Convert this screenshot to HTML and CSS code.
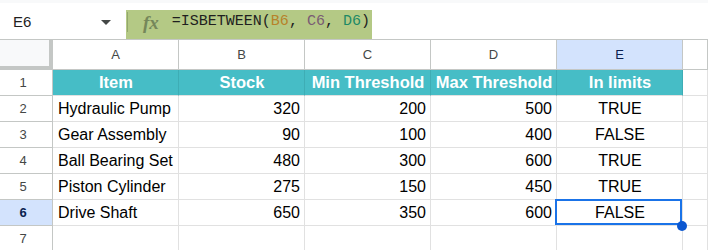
FILE: index.html
```html
<!DOCTYPE html>
<html lang="en">
<head>
    <meta charset="UTF-8">
    <title>ISBETWEEN sheet</title>
    <link rel="stylesheet" href="styles.css">
</head>
<body>
    <div class="topbar">
        <div class="namebox">
            <span class="ref">E6</span>
            <span class="caret"></span>
        </div>
        <div class="formula">
            <span class="fx">fx</span>
            <span class="expr">=ISBETWEEN(<span class="r-b">B6</span>, <span class="r-c">C6</span>, <span class="r-d">D6</span>)</span>
        </div>
    </div>

    <div class="sheet">
        <div class="corner"></div>
        <div class="col-head">A</div>
        <div class="col-head">B</div>
        <div class="col-head">C</div>
        <div class="col-head">D</div>
        <div class="col-head active">E</div>
        <div class="col-head"></div>

        <div class="row-head">1</div>
        <div class="cell hdr">Item</div>
        <div class="cell hdr">Stock</div>
        <div class="cell hdr">Min Threshold</div>
        <div class="cell hdr">Max Threshold</div>
        <div class="cell hdr">In limits</div>
        <div class="cell"></div>

        <div class="row-head">2</div>
        <div class="cell">Hydraulic Pump</div>
        <div class="cell num">320</div>
        <div class="cell num">200</div>
        <div class="cell num">500</div>
        <div class="cell mid">TRUE</div>
        <div class="cell"></div>

        <div class="row-head">3</div>
        <div class="cell">Gear Assembly</div>
        <div class="cell num">90</div>
        <div class="cell num">100</div>
        <div class="cell num">400</div>
        <div class="cell mid">FALSE</div>
        <div class="cell"></div>

        <div class="row-head">4</div>
        <div class="cell">Ball Bearing Set</div>
        <div class="cell num">480</div>
        <div class="cell num">300</div>
        <div class="cell num">600</div>
        <div class="cell mid">TRUE</div>
        <div class="cell"></div>

        <div class="row-head">5</div>
        <div class="cell">Piston Cylinder</div>
        <div class="cell num">275</div>
        <div class="cell num">150</div>
        <div class="cell num">450</div>
        <div class="cell mid">TRUE</div>
        <div class="cell"></div>

        <div class="row-head active">6</div>
        <div class="cell">Drive Shaft</div>
        <div class="cell num">650</div>
        <div class="cell num">350</div>
        <div class="cell num">600</div>
        <div class="cell mid sel">FALSE<span class="handle"></span></div>
        <div class="cell"></div>

        <div class="row-head">7</div>
        <div class="cell"></div>
        <div class="cell"></div>
        <div class="cell"></div>
        <div class="cell"></div>
        <div class="cell"></div>
        <div class="cell"></div>
    </div>
</body>
</html>
```

FILE: styles.css
```css
body {
    margin: 0;
    width: 708px;
    height: 250px;
    overflow: hidden;
    background: white;
    font-family: 'Liberation Sans', Arial, sans-serif;
    color: #000;
}

/* name box + formula bar */
.topbar {
    display: flex;
    height: 36px;
    border-top: 3px solid #f8f9fa;
    border-bottom: 1px solid #c4c7c5;
}

.namebox {
    width: 126px;
    display: flex;
    align-items: flex-start;
    justify-content: space-between;
    padding: 7px 15px 0 13px;
    box-sizing: border-box;
}

.ref {
    font-size: 15px;
    line-height: 24px;
    color: #1f1f1f;
}

.caret {
    width: 0;
    height: 0;
    margin-top: 10px;
    border-left: 5px solid transparent;
    border-right: 5px solid transparent;
    border-top: 5px solid #444746;
}

.formula {
    margin-top: 7px;
    width: 246px;
    height: 29px;
    background: #b4c985;
    display: flex;
    align-items: flex-start;
    box-sizing: border-box;
}

.fx {
    margin-top: 2px;
    height: 20px;
    border-left: 1px solid #93a86c;
    margin-left: 1px;
    padding: 0 13px 0 15px;
    font-family: 'Liberation Serif', serif;
    font-style: italic;
    font-weight: bold;
    font-size: 19px;
    line-height: 22px;
    color: #75875a;
}

.expr {
    font-family: 'Liberation Mono', monospace;
    font-size: 15px;
    line-height: 24px;
    color: #1f1f1f;
    white-space: nowrap;
}

.r-b { color: #b7822a; }
.r-c { color: #7a5b73; }
.r-d { color: #1d8a65; }

/* grid */
.sheet {
    display: grid;
    grid-template-columns: 53px repeat(5, 126px) 1fr;
    grid-template-rows: 30px;
    grid-auto-rows: 26px;
}

.sheet > div {
    box-sizing: border-box;
}

.corner {
    background: #f8f9fa;
    border-right: 4px solid #c4c7c5;
    border-bottom: 4px solid #c4c7c5;
}

.col-head {
    display: flex;
    align-items: center;
    justify-content: center;
    font-size: 13px;
    color: #444746;
    border-right: 1px solid #c4c7c5;
    border-bottom: 1px solid #c4c7c5;
}

.row-head {
    display: flex;
    align-items: center;
    justify-content: center;
    padding-right: 6px;
    font-size: 13px;
    color: #444746;
    border-right: 1px solid #c4c7c5;
    border-bottom: 1px solid #c4c7c5;
}

.col-head.active,
.row-head.active {
    background: #d3e3fd;
    color: #0b1f4f;
}

.row-head.active {
    font-weight: bold;
}

.cell {
    display: flex;
    align-items: center;
    padding: 0 4px 0 5px;
    font-size: 16px;
    white-space: nowrap;
    border-right: 1px solid #e1e1e1;
    border-bottom: 1px solid #e1e1e1;
}

.cell.hdr {
    background: #46bdc6;
    color: white;
    font-weight: bold;
    font-size: 16.5px;
    justify-content: center;
    border-right-color: #3eadb5;
}

.cell.num {
    justify-content: flex-end;
}

.cell.mid {
    justify-content: center;
}

/* selected cell E6 */
.cell.sel {
    position: relative;
}

.cell.sel::after {
    content: "";
    position: absolute;
    top: -1px;
    left: -2px;
    width: 127px;
    height: 26px;
    border: 2px solid #1a73e8;
    box-sizing: border-box;
}

.handle {
    position: absolute;
    right: -5px;
    bottom: -6px;
    width: 10px;
    height: 10px;
    border-radius: 50%;
    background: #0b57d0;
    z-index: 2;
}
```
